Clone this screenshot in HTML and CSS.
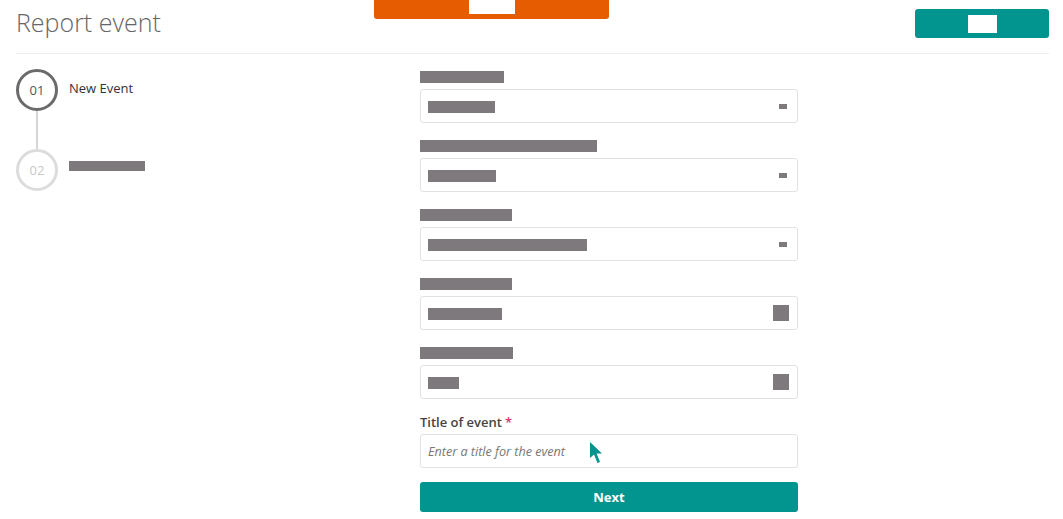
FILE: index.html
```html
<!DOCTYPE html>
<html>
<head>
<meta charset="utf-8">
<link rel="stylesheet" href="styles.css">
</head>
<body>
<header class="header">
  <h1 class="title">Report event</h1>
  <div class="banner"><span class="banner-box"></span></div>
  <button class="top-btn"><span class="top-btn-box"></span></button>
</header>
<main class="main">
  <aside class="stepper">
    <div class="step step-active">
      <div class="circle">01</div>
      <div class="step-label">New Event</div>
    </div>
    <div class="connector"></div>
    <div class="step step-idle">
      <div class="circle">02</div>
      <div class="step-bar"></div>
    </div>
  </aside>
  <form class="form">
    <div class="field">
      <div class="label"><span class="bar" style="width:84px"></span></div>
      <div class="input"><span class="bar val" style="width:67px"></span><span class="icon-dash"></span></div>
    </div>
    <div class="field">
      <div class="label"><span class="bar" style="width:177px"></span></div>
      <div class="input"><span class="bar val" style="width:68px"></span><span class="icon-dash"></span></div>
    </div>
    <div class="field">
      <div class="label"><span class="bar" style="width:92px"></span></div>
      <div class="input"><span class="bar val" style="width:159px"></span><span class="icon-dash"></span></div>
    </div>
    <div class="field">
      <div class="label"><span class="bar" style="width:92px"></span></div>
      <div class="input"><span class="bar val" style="width:74px"></span><span class="icon-sq"></span></div>
    </div>
    <div class="field">
      <div class="label"><span class="bar" style="width:93px"></span></div>
      <div class="input"><span class="bar val" style="width:31px"></span><span class="icon-sq"></span></div>
    </div>
    <div class="field">
      <label class="label text-label">Title of event <span class="req">*</span></label>
      <div class="input title-input">
        <span class="placeholder">Enter a title for the event</span>
        <svg class="cursor" width="16" height="24" viewBox="0 0 16 24"><path d="M1 1 L1 17 L5 13.5 L8.5 22 L11 21 L7.6 12.6 L13 12.6 Z" fill="#06938f"/></svg>
      </div>
    </div>
    <button type="button" class="next">Next</button>
  </form>
</main>
</body>
</html>
```
FILE: styles.css
```css
* { box-sizing: border-box; }
html, body { margin: 0; padding: 0; background: #fff; }
body { font-family: "Open Sans", "Liberation Sans", sans-serif; color: #444; width: 1063px; height: 519px; overflow: hidden; }

.header {
  display: flex;
  align-items: flex-start;
  height: 54px;
  margin: 0 14px 0 16px;
  border-bottom: 1px solid #ececec;
}
.title {
  flex: 0 0 358px;
  margin: 4px 0 0 0;
  font-size: 25px;
  font-weight: 300;
  color: #666;
  line-height: 36px;
}
.banner {
  width: 235px;
  height: 19px;
  background: #e65c00;
  border-radius: 0 0 3px 3px;
  display: flex;
  justify-content: center;
}
.banner-box {
  display: block;
  width: 46px;
  height: 14px;
  background: #fff;
  margin-left: 1px;
}
.top-btn {
  margin: 9px 0 0 auto;
  width: 134px;
  height: 29px;
  border: 0;
  border-radius: 3px;
  background: #029590;
  display: flex;
  align-items: center;
  justify-content: center;
  padding: 0;
}
.top-btn-box {
  display: block;
  width: 29px;
  height: 18px;
  background: #fff;
  margin-left: 1px;
}

.main {
  display: flex;
  padding-left: 16px;
}
.stepper {
  flex: 0 0 404px;
  padding-top: 15px;
}
.step {
  display: flex;
  align-items: flex-start;
}
.circle {
  width: 42px;
  height: 42px;
  border-radius: 50%;
  display: flex;
  align-items: center;
  justify-content: center;
  font-size: 13px;
}
.step-active .circle { border: 3px solid #6b6b6b; color: #555; }
.step-idle .circle { border: 3px solid #dcdcdc; color: #c8c8c8; }
.step-label {
  margin: 11px 0 0 11px;
  font-size: 13px;
  color: #333;
  line-height: 16px;
}
.step-bar {
  width: 76px;
  height: 10px;
  background: #7e797d;
  margin: 12px 0 0 11px;
}
.connector {
  width: 2px;
  height: 38px;
  background: #d6d6d6;
  margin-left: 20px;
}

.form {
  flex: 0 0 378px;
  padding-top: 13px;
  display: flex;
  flex-direction: column;
}
.field { margin-bottom: 13px; }
.label {
  height: 20px;
  margin-bottom: 2px;
  display: flex;
  align-items: center;
}
.bar {
  display: block;
  height: 12px;
  background: #7e797d;
}
.input {
  height: 34px;
  border: 1px solid #e2e2e2;
  border-radius: 3px;
  display: flex;
  align-items: center;
  padding: 0 8px 0 7px;
  position: relative;
}
.input .val { height: 12px; margin-top: 1px; }
.icon-dash {
  margin-left: auto;
  width: 8px;
  height: 5px;
  background: #7e797d;
  margin-right: 2px;
}
.icon-sq {
  margin-left: auto;
  width: 16px;
  height: 16px;
  background: #7e797d;
}
.text-label {
  font-size: 13px;
  font-weight: 600;
  color: #444;
}
.req { color: #d6336c; margin-left: 3px; }
.placeholder {
  font-style: italic;
  font-size: 12.6px;
  color: #777;
}
.cursor {
  position: absolute;
  left: 168px;
  top: 6px;
}
.next {
  margin-top: 1px;
  height: 30px;
  border: 0;
  border-radius: 3px;
  background: #029590;
  color: #fff;
  font-family: "Open Sans", "Liberation Sans", sans-serif;
  font-weight: 700;
  font-size: 13px;
}
```
